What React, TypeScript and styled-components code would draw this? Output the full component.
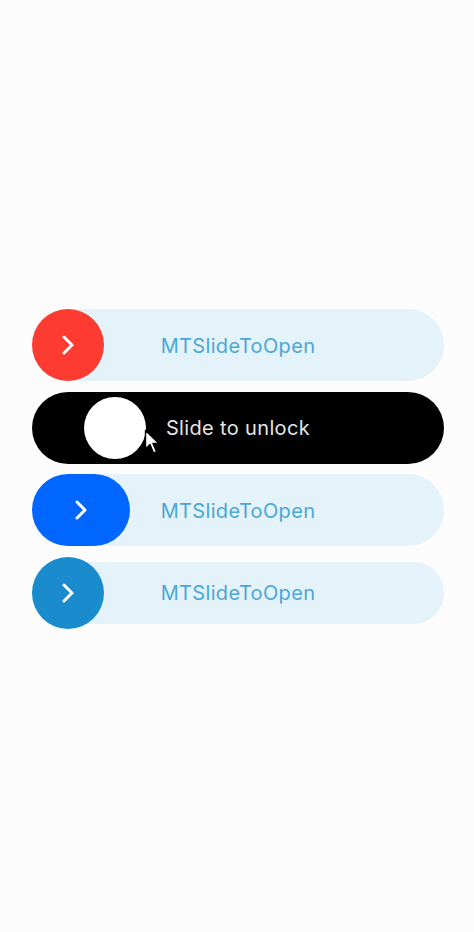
import React from 'react'
import styled, { createGlobalStyle } from 'styled-components'

const GlobalStyle = createGlobalStyle`
  html, body {
    margin: 0;
    padding: 0;
    background: #fcfcfc;
  }
  body {
    font-family: Inter, "Noto Sans", sans-serif;
    -webkit-font-smoothing: antialiased;
  }
`

const Page = styled.div`
  min-height: 932px;
  padding: 309px 30px 0 32px;
  box-sizing: border-box;
  display: flex;
  flex-direction: column;
  gap: 10.5px;
`

const Slider = styled.div`
  position: relative;
  width: 412px;
  height: 72px;
  display: flex;
`

const Track = styled.div<{ $bg: string; $inset?: number }>`
  flex: 1;
  margin: ${({ $inset }) => $inset || 0}px 0;
  border-radius: 36px;
  background: ${({ $bg }) => $bg};
  display: flex;
  align-items: center;
  justify-content: center;
`

const Label = styled.span<{ $color: string }>`
  color: ${({ $color }) => $color};
  font-size: 20px;
  letter-spacing: 0.35px;
  padding-top: 1px;
`

const Thumb = styled.div<{ $bg: string; $width: number; $size?: number }>`
  position: absolute;
  top: 50%;
  transform: translateY(-50%);
  width: ${({ $width }) => $width}px;
  height: ${({ $size }) => $size || 72}px;
  border-radius: 36px;
  background: ${({ $bg }) => $bg};
  display: flex;
  align-items: center;
  justify-content: center;
`

const Pointer = styled.svg`
  position: absolute;
  left: 112px;
  top: 37px;
`

const Chevron = () => (
  <svg width="14" height="20" viewBox="0 0 14 20">
    <polyline
      points="3,2 11,10 3,18"
      fill="none"
      stroke="#fff"
      strokeWidth="3"
      strokeLinecap="round"
      strokeLinejoin="round"
    />
  </svg>
)

const trackBlue = '#e4f2fa'
const labelBlue = '#4ba7d5'

const App: React.FC = () => {
  return (
    <>
      <GlobalStyle />
      <Page>
        <Slider>
          <Track $bg={trackBlue}>
            <Label $color={labelBlue}>MTSlideToOpen</Label>
          </Track>
          <Thumb $bg="#fd3b30" $width={72} style={{ left: 0 }}>
            <Chevron />
          </Thumb>
        </Slider>

        <Slider>
          <Track $bg="#000">
            <Label $color="#e4e4e4">Slide to unlock</Label>
          </Track>
          <Thumb $bg="#fff" $width={62} $size={62} style={{ left: 52 }} />
          <Pointer width="18" height="26" viewBox="0 0 18 26">
            <path
              d="M1.5 1.5 L1.5 20 L6 15.5 L9.5 24 L12.5 22.8 L9 14.5 L15 14.5 Z"
              fill="#fff"
              stroke="#000"
              strokeWidth="1.4"
              strokeLinejoin="round"
            />
          </Pointer>
        </Slider>

        <Slider>
          <Track $bg={trackBlue}>
            <Label $color={labelBlue}>MTSlideToOpen</Label>
          </Track>
          <Thumb $bg="#0066ff" $width={98} style={{ left: 0 }}>
            <Chevron />
          </Thumb>
        </Slider>

        <Slider>
          <Track $bg={trackBlue} $inset={5}>
            <Label $color={labelBlue}>MTSlideToOpen</Label>
          </Track>
          <Thumb $bg="#1a8bcc" $width={72} style={{ left: 0 }}>
            <Chevron />
          </Thumb>
        </Slider>
      </Page>
    </>
  )
}

export default App
